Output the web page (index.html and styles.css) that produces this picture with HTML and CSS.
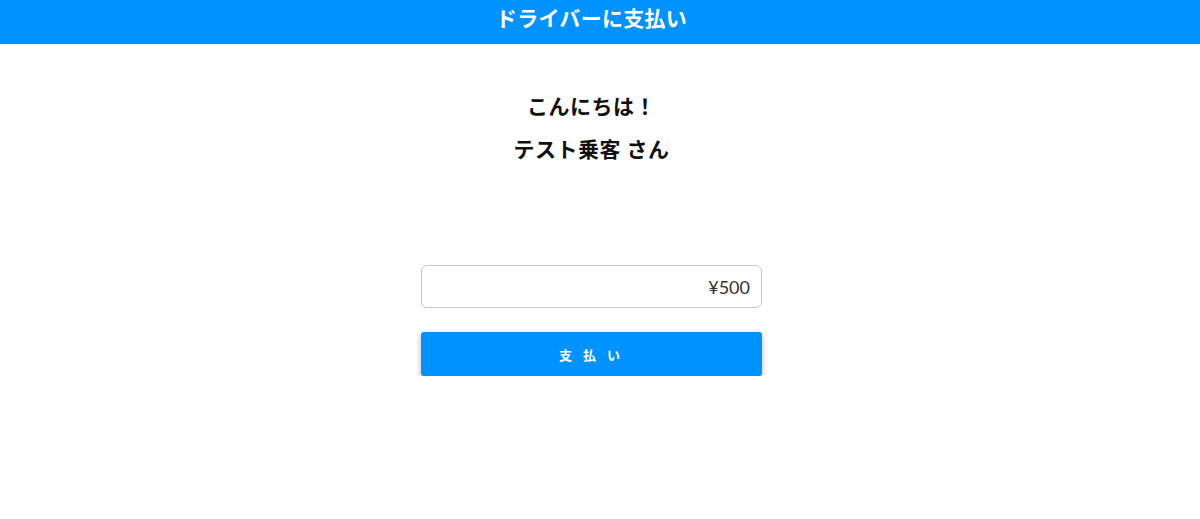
FILE: index.html
```html
<!DOCTYPE html>
<html lang="ja">

<head>
  <meta charset="UTF-8">
  <meta name="viewport" content="width=device-width, initial-scale=1.0">
  <title>ドライバーに支払い</title>
  <link rel="stylesheet" href="styles.css">
</head>

<body>
  <header class="topbar">
    <h1>ドライバーに支払い</h1>
  </header>

  <main class="content">
    <div class="greeting">
      <p>こんにちは！</p>
      <p>テスト乗客 さん</p>
    </div>

    <!-- Payment Form -->
    <form class="pay-form">
      <input type="text" class="amount" value="¥500">
      <button type="submit" class="pay-btn">支 払 い</button>
    </form>
  </main>
</body>

</html>
```

FILE: styles.css
```css
body {
  margin: 0;
  font-family: "Noto Sans CJK JP", "Noto Sans", sans-serif;
  background: #fff;
  color: #111;
}

.topbar {
  background-color: #0092ff;
  height: 44px;
  padding-right: 17px;
  display: flex;
  justify-content: center;
}

.topbar h1 {
  margin: 0;
  font-size: 21px;
  line-height: 34px;
  letter-spacing: 0.3px;
  color: #fff;
  font-weight: 700;
}

.content {
  padding-right: 17px;
  display: flex;
  flex-direction: column;
  align-items: center;
}

.greeting {
  margin-top: 46px;
  text-align: center;
}

.greeting p {
  margin: 0;
  font-size: 21px;
  font-weight: 700;
  line-height: 30px;
  letter-spacing: 0.5px;
}

.greeting p + p {
  margin-top: 13px;
}

.pay-form {
  margin-top: 102px;
  width: 341px;
  display: flex;
  flex-direction: column;
  gap: 24px;
}

.amount {
  box-sizing: border-box;
  height: 43px;
  width: 100%;
  padding: 0 11px;
  border: 1px solid #c8c8c8;
  border-radius: 6px;
  text-align: right;
  font-family: "Lato", sans-serif;
  font-size: 18px;
  color: #333;
}

.pay-btn {
  height: 44px;
  width: 100%;
  border: none;
  border-radius: 3px;
  background-color: #0092ff;
  color: #fff;
  font-family: "Noto Sans CJK JP", sans-serif;
  font-size: 13px;
  font-weight: 700;
  letter-spacing: 4px;
  box-shadow: 0 2px 6px rgba(0, 0, 0, 0.3);
  cursor: pointer;
}
```
